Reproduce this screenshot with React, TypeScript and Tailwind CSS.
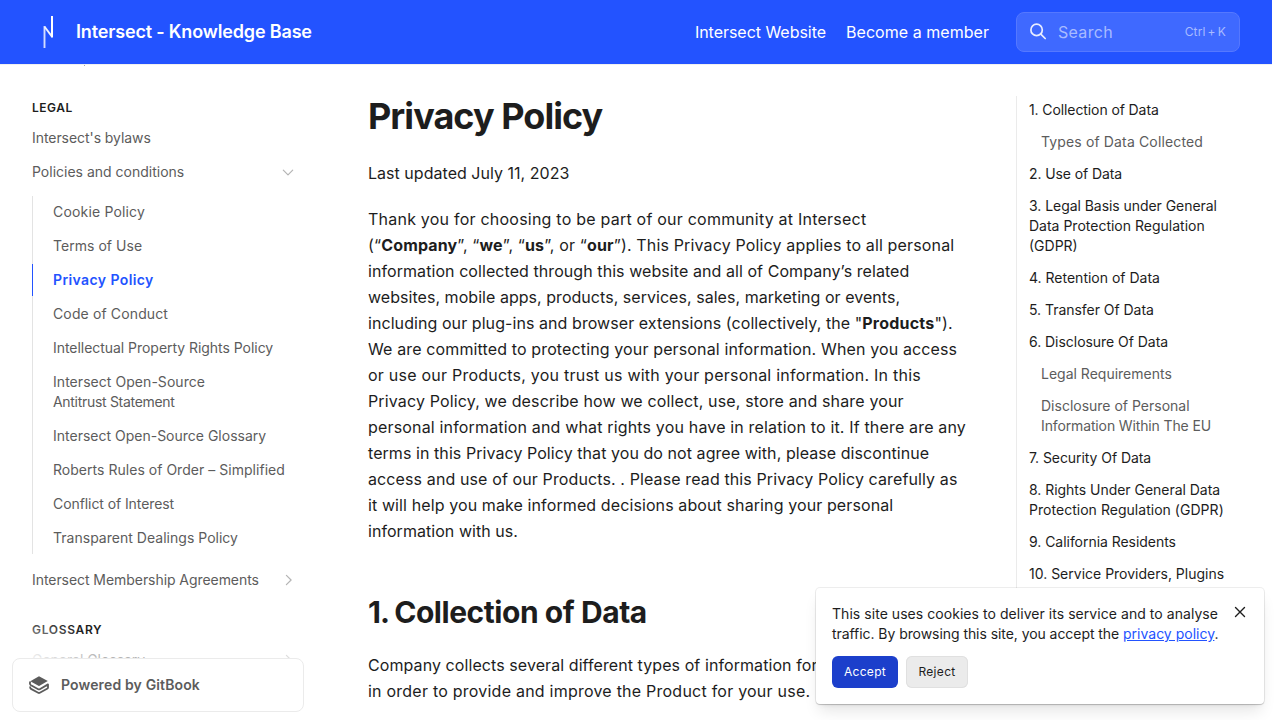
import React from "react";

type Line = { text: string; track?: string };
type NavItem = { lines: Line[]; active?: boolean };
type Section = { lines: Line[]; sub?: boolean };

const policies: NavItem[] = [
  { lines: [{ text: "Cookie Policy", track: "tracking-[0.17px]" }] },
  { lines: [{ text: "Terms of Use", track: "tracking-[0.04px]" }] },
  { lines: [{ text: "Privacy Policy", track: "tracking-[0.4px]" }], active: true },
  { lines: [{ text: "Code of Conduct", track: "tracking-[0.13px]" }] },
  { lines: [{ text: "Intellectual Property Rights Policy", track: "tracking-[-0.04px]" }] },
  {
    lines: [
      { text: "Intersect Open-Source", track: "tracking-[0.05px]" },
      { text: "Antitrust Statement", track: "tracking-[-0.3px]" },
    ],
  },
  { lines: [{ text: "Intersect Open-Source Glossary" }] },
  { lines: [{ text: "Roberts Rules of Order – Simplified", track: "tracking-[0.03px]" }] },
  { lines: [{ text: "Conflict of Interest", track: "tracking-[-0.08px]" }] },
  { lines: [{ text: "Transparent Dealings Policy", track: "tracking-[0.02px]" }] },
];

const sections: Section[] = [
  { lines: [{ text: "1. Collection of Data", track: "tracking-[-0.1px]" }] },
  { lines: [{ text: "Types of Data Collected", track: "tracking-[0.14px]" }], sub: true },
  { lines: [{ text: "2. Use of Data", track: "tracking-[-0.1px]" }] },
  {
    lines: [
      { text: "3. Legal Basis under General", track: "tracking-[-0.05px]" },
      { text: "Data Protection Regulation" },
      { text: "(GDPR)" },
    ],
  },
  { lines: [{ text: "4. Retention of Data" }] },
  { lines: [{ text: "5. Transfer Of Data", track: "tracking-[-0.04px]" }] },
  { lines: [{ text: "6. Disclosure Of Data", track: "tracking-[-0.04px]" }] },
  { lines: [{ text: "Legal Requirements" }], sub: true },
  {
    lines: [
      { text: "Disclosure of Personal" },
      { text: "Information Within The EU", track: "tracking-[-0.13px]" },
    ],
    sub: true,
  },
  { lines: [{ text: "7. Security Of Data", track: "tracking-[-0.07px]" }] },
  {
    lines: [
      { text: "8. Rights Under General Data", track: "tracking-[-0.03px]" },
      { text: "Protection Regulation (GDPR)", track: "tracking-[0.03px]" },
    ],
  },
  { lines: [{ text: "9. California Residents", track: "tracking-[-0.04px]" }] },
  { lines: [{ text: "10. Service Providers, Plugins" }] },
];

function Lines({ lines }: { lines: Line[] }) {
  return (
    <>
      {lines.map((l) => (
        <span key={l.text} className={`block whitespace-nowrap ${l.track ?? ""}`}>
          {l.text}
        </span>
      ))}
    </>
  );
}

function Chevron({ open = false }: { open?: boolean }) {
  return (
    <svg
      width="12"
      height="12"
      viewBox="0 0 12 12"
      fill="none"
      stroke="#b4b4b4"
      strokeWidth="1.2"
      strokeLinecap="round"
      strokeLinejoin="round"
      className="mr-[10px] shrink-0"
    >
      {open ? <path d="M1.3 4.2L6 8.9l4.7-4.7" /> : <path d="M4.4 1.3L9.1 6l-4.7 4.7" />}
    </svg>
  );
}

function Header() {
  return (
    <header className="z-20 flex h-16 w-[1272px] shrink-0 items-center bg-[#2353ff] pr-8 pl-8 text-white shadow-[0_1px_0_0_#f0f0f0]">
      <svg width="32" height="32" viewBox="0 0 32 32" fill="none" className="shrink-0">
        <path d="M12.5 32V10" stroke="#d3dcff" strokeWidth="1.9" />
        <path d="M12.6 10.8L20 20.6" stroke="#eef1ff" strokeWidth="1.9" />
        <path d="M20 21.5V0" stroke="#ffffff" strokeWidth="2" />
      </svg>
      <div className="ml-3 pb-0.5 text-[18px] font-semibold tracking-[-0.16px] whitespace-nowrap">Intersect - Knowledge Base</div>
      <nav className="ml-auto flex gap-5 text-base whitespace-nowrap">
        <a className="tracking-[-0.03px]">Intersect Website</a>
        <a className="tracking-[0.04px]">Become a member</a>
      </nav>
      <div className="ml-[27px] flex h-10 w-56 items-center rounded-lg border border-[#5578ff] bg-[#3f69ff] px-3">
        <svg width="18" height="18" viewBox="0 0 18 18" fill="none" stroke="#e8edff" strokeWidth="1.7" strokeLinecap="round">
          <circle cx="7.6" cy="6.9" r="5.7" />
          <path d="M11.8 11.1L16.2 15.5" />
        </svg>
        <span className="ml-[11px] text-base tracking-[0.3px] text-[#a8bbff]">Search</span>
        <span className="mr-px ml-auto text-[12px] tracking-[0.1px] [word-spacing:-1.3px] text-[#a8bbff]">Ctrl + K</span>
      </div>
    </header>
  );
}

function Sidebar() {
  return (
    <aside className="relative w-[304px] shrink-0 overflow-hidden pl-8 text-[14px] leading-5 text-[#5c5c5c]">
      <div className="ml-[52px] h-0.5 w-px bg-[#a3a3a3]" />
      <div className="mt-8 text-[12px] leading-5 font-semibold tracking-[0.5px] text-[#1d1d1d]">LEGAL</div>
      <div className="mt-[10px] tracking-[-0.06px]">Intersect's bylaws</div>
      <div className="mt-[14px] flex items-center justify-between">
        Policies and conditions
        <Chevron open />
      </div>
      <ul className="mt-[14px] flex flex-col gap-[2px] border-l border-[#e3e3e3]">
        {policies.map((p) => (
          <li
            key={p.lines[0].text}
            className={
              p.active
                ? "-ml-px border-l border-[#2353ff] py-1.5 pl-5 font-semibold text-[#2353ff]"
                : "py-1.5 pl-5"
            }
          >
            <Lines lines={p.lines} />
          </li>
        ))}
      </ul>
      <div className="mt-4 flex items-center justify-between tracking-[-0.06px]">
        Intersect Membership Agreements
        <Chevron />
      </div>
      <div className="mt-[30px] text-[12px] leading-5 font-semibold tracking-[0.67px] text-[#1d1d1d]">GLOSSARY</div>
      <div className="mt-[10px] flex items-center justify-between tracking-[-0.04px]">
        General Glossary
        <Chevron />
      </div>
      <div className="absolute bottom-[8px] left-3 h-[104px] w-[292px] bg-[radial-gradient(90px_50px_at_0px_54px,#fff,transparent),linear-gradient(to_bottom,transparent_28px,rgba(255,255,255,0.55)_46px)]" />
      <div className="absolute bottom-2 left-3 flex h-[54px] w-[292px] items-center rounded-lg border border-[#ebebeb] bg-white pl-4 font-semibold">
        <svg width="20" height="18" viewBox="0 0 20 18" fill="none">
          <path d="M10 0.2L18.8 4.9 10.6 9.8Q10 10.1 9.4 9.8L1.3 5.2z" fill="#5c5c5c" />
          <path
            d="M1.5 5.5C0.6 6.5 0.7 8.5 2 9.3L9.2 13.2Q10 13.6 10.8 13.2L19 8.4V11.7Q19 12.1 18.5 12.4L10.8 16.8Q10 17.2 9.2 16.8L2 12.9Q1 12.2 1.1 10.5"
            stroke="#5c5c5c"
            strokeWidth="1.8"
            strokeLinejoin="round"
          />
        </svg>
        <span className="ml-3 tracking-[0.14px]">Powered by GitBook</span>
      </div>
    </aside>
  );
}

function Article() {
  return (
    <main className="ml-16 w-[600px] shrink-0 pt-8 text-base leading-[26px] whitespace-nowrap text-[#1d1d1d]">
      <h1 className="text-[36px] leading-10 font-bold tracking-[-0.96px]">Privacy Policy</h1>
      <p className="mt-6 tracking-[0.03px]">Last updated July 11, 2023</p>
      <p className="mt-5">
        <span className="block tracking-[0.225px]">Thank you for choosing to be part of our community at Intersect</span>
        <span className="block tracking-[0.15px]">
          (“<b>Company</b>”, “<b>we</b>”, “<b>us</b>”, or “<b>our</b>”). This Privacy Policy applies to all personal
        </span>
        <span className="block tracking-[0.07px]">information collected through this website and all of Company’s related</span>
        <span className="block tracking-[0.04px]">websites, mobile apps, products, services, sales, marketing or events,</span>
        <span className="block tracking-[0.07px]">
          including our plug-ins and browser extensions (collectively, the "<b className="tracking-[0.22px]">Products</b>").
        </span>
        <span className="block tracking-[0.13px]">We are committed to protecting your personal information. When you access</span>
        <span className="block tracking-[0.23px]">or use our Products, you trust us with your personal information. In this</span>
        <span className="block tracking-[0.145px]">Privacy Policy, we describe how we collect, use, store and share your</span>
        <span className="block tracking-[0.165px]">personal information and what rights you have in relation to it. If there are any</span>
        <span className="block tracking-[0.065px]">terms in this Privacy Policy that you do not agree with, please discontinue</span>
        <span className="block tracking-[0.115px]">access and use of our Products. . Please read this Privacy Policy carefully as</span>
        <span className="block tracking-[0.105px]">it will help you make informed decisions about sharing your personal</span>
        <span className="block tracking-[0.05px]">information with us.</span>
      </p>
      <h2 className="mt-12 text-[30px] leading-[40px] font-bold tracking-[-0.45px]">
        <span className="tracking-[-1px]">1. </span>Collection of Data
      </h2>
      <p className="mt-5">
        <span className="block tracking-[0.08px]">Company collects several different types of information for</span>
        <span className="block tracking-[0.23px]">in order to provide and improve the Product for your use.</span>
      </p>
    </main>
  );
}

function Outline() {
  return (
    <aside className="mt-8 mb-8 ml-12 flex w-56 shrink-0 flex-col gap-3 overflow-hidden border-l border-[#ebebeb] pt-1 pl-3 text-[14px] leading-5">
      {sections.map((s) => (
        <a key={s.lines[0].text} className={s.sub ? "pl-3 text-[#5c5c5c]" : "text-[#1d1d1d]"}>
          <Lines lines={s.lines} />
        </a>
      ))}
    </aside>
  );
}

function CookieBanner() {
  return (
    <div className="absolute right-4 bottom-4 z-30 h-[116px] w-[448px] rounded bg-white px-4 pt-4 text-[14px] leading-5 text-[#1d1d1d] shadow-[0_0_0_1px_rgba(0,0,0,0.07),0_1px_1px_rgba(0,0,0,0.15),0_10px_15px_-3px_rgba(0,0,0,0.1),0_4px_6px_-4px_rgba(0,0,0,0.1)]">
      <p className="whitespace-nowrap">
        <span className="block tracking-[0.05px]">This site uses cookies to deliver its service and to analyse</span>
        <span className="block">
          <span className="tracking-[-0.06px]">traffic. By browsing this site, you accept the </span>
          <a className="text-[#2353ff] underline">privacy policy</a>.
        </span>
      </p>
      <div className="mt-3 flex gap-2 text-[12px] tracking-[0.33px]">
        <button className="h-8 w-[66px] rounded-md bg-[#1c3fcb] text-white">Accept</button>
        <button className="h-8 w-[62px] rounded-md bg-[#ebebeb] ring-1 ring-[#e0e0e0] ring-inset">Reject</button>
      </div>
      <svg
        width="12"
        height="12"
        viewBox="0 0 12 12"
        stroke="#1d1d1d"
        strokeWidth="1.4"
        strokeLinecap="round"
        className="absolute top-[18px] right-[18px]"
      >
        <path d="M1.5 1.5L10.5 10.5M10.5 1.5L1.5 10.5" />
      </svg>
    </div>
  );
}

export default function App() {
  return (
    <div className="relative flex h-[720px] w-[1280px] flex-col overflow-hidden bg-white font-['Inter',sans-serif]">
      <Header />
      <div className="flex min-h-0 flex-1 overflow-hidden">
        <Sidebar />
        <Article />
        <Outline />
      </div>
      <CookieBanner />
    </div>
  );
}
